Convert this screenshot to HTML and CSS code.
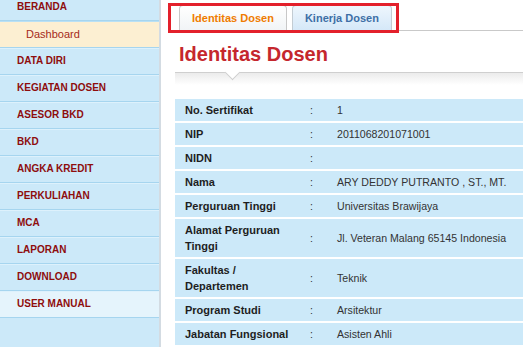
FILE: index.html
```html
<!DOCTYPE html>
<html lang="id">
<head>
    <meta charset="UTF-8">
    <meta name="viewport" content="width=device-width, initial-scale=1.0">
    <title>Identitas Dosen</title>
    <link rel="stylesheet" href="styles.css">
</head>
<body>
    <div class="page">
        <div class="sidebar">
            <ul class="menu">
                <li><a href="#">BERANDA</a></li>
                <li class="sub"><a href="#">Dashboard</a></li>
                <li><a href="#">DATA DIRI</a></li>
                <li><a href="#">KEGIATAN DOSEN</a></li>
                <li><a href="#">ASESOR BKD</a></li>
                <li><a href="#">BKD</a></li>
                <li><a href="#">ANGKA KREDIT</a></li>
                <li><a href="#">PERKULIAHAN</a></li>
                <li><a href="#">MCA</a></li>
                <li><a href="#">LAPORAN</a></li>
                <li><a href="#">DOWNLOAD</a></li>
                <li class="light"><a href="#">USER MANUAL</a></li>
            </ul>
        </div>

        <div class="main">
            <div class="tabs">
                <a href="#" class="tab active">Identitas Dosen</a>
                <a href="#" class="tab">Kinerja Dosen</a>
            </div>
            <div class="highlight"></div>

            <div class="title">
                <h1>Identitas Dosen</h1>
            </div>
            <div class="shade"></div>

            <table class="info">
                <colgroup>
                    <col class="c-label">
                    <col class="c-sep">
                    <col>
                </colgroup>
                <tr><th>No. Sertifikat</th><td class="sep">:</td><td>1</td></tr>
                <tr><th>NIP</th><td class="sep">:</td><td>2011068201071001</td></tr>
                <tr><th>NIDN</th><td class="sep">:</td><td></td></tr>
                <tr><th>Nama</th><td class="sep">:</td><td>ARY DEDDY PUTRANTO , ST., MT.</td></tr>
                <tr><th>Perguruan Tinggi</th><td class="sep">:</td><td>Universitas Brawijaya</td></tr>
                <tr><th>Alamat Perguruan Tinggi</th><td class="sep">:</td><td>Jl. Veteran Malang 65145 Indonesia</td></tr>
                <tr><th>Fakultas / Departemen</th><td class="sep">:</td><td>Teknik</td></tr>
                <tr><th>Program Studi</th><td class="sep">:</td><td>Arsitektur</td></tr>
                <tr><th>Jabatan Fungsional</th><td class="sep">:</td><td>Asisten Ahli</td></tr>
            </table>
        </div>
    </div>
</body>
</html>
```

FILE: styles.css
```css
body {
    margin: 0;
    font-family: "Liberation Sans", Arial, sans-serif;
    background: #fff;
}
.page {
    display: flex;
    height: 347px;
    overflow: hidden;
}
.sidebar {
    width: 159px;
    flex: none;
    background: #cce9f9;
    border-right: 2px solid #d3dbe2;
}
.menu {
    list-style: none;
    margin: -6px 0 0;
    padding: 0;
}
.menu li {
    border-bottom: 1px solid #a6d5ef;
    box-shadow: inset 0 1px 0 #ddf1fc;
}
.menu a {
    display: block;
    height: 26px;
    line-height: 26px;
    padding-left: 17px;
    font-size: 10px;
    font-weight: bold;
    color: #8e0d0d;
    text-decoration: none;
}
.menu .sub {
    background: #fcefd2;
    box-shadow: inset 0 1px 0 #b9e0f4;
}
.menu .sub a {
    padding-left: 26px;
    font-size: 11px;
    font-weight: normal;
    color: #a52a1a;
}
.menu .light {
    background: #e5f4fc;
}
.main {
    flex: 1;
    position: relative;
    padding-left: 14px;
}
.tabs {
    display: flex;
    gap: 5px;
    padding: 5px 0 0 4px;
    border-bottom: 1px solid #c9c9c9;
}
.tab {
    display: block;
    padding: 0 12px;
    line-height: 24px;
    font-size: 11px;
    font-weight: bold;
    text-decoration: none;
    border: 1px solid #c3ccd3;
    border-bottom: none;
    border-radius: 4px 4px 0 0;
    color: #3d6fa6;
    background: linear-gradient(#eef6fd, #d5e8f8);
}
.tab.active {
    color: #f07c00;
    border-color: #c8c8c8;
    background: linear-gradient(#ffffff, #f1f4f6);
}
.highlight {
    position: absolute;
    left: 7px;
    top: 3px;
    width: 231px;
    height: 30px;
    box-sizing: border-box;
    border: 3px solid #e3202b;
}
.title {
    position: relative;
    padding: 11px 0 6px 4px;
    border-bottom: 1px solid #cfcfcf;
}
.title::after {
    content: "";
    position: absolute;
    left: 52px;
    bottom: -6px;
    width: 10px;
    height: 10px;
    background: #fff;
    border-right: 1px solid #cfcfcf;
    border-bottom: 1px solid #cfcfcf;
    transform: rotate(45deg);
}
h1 {
    margin: 0;
    font-size: 20px;
    line-height: 24px;
    color: #c5272d;
}
.shade {
    height: 12px;
    background: linear-gradient(#ebebeb, #ffffff);
}
.info {
    width: 100%;
    margin-top: 14px;
    border-collapse: collapse;
    table-layout: fixed;
    font-size: 11px;
}
.c-label {
    width: 125px;
}
.c-sep {
    width: 37px;
}
.info th,
.info td {
    background: #cce9f9;
    border-bottom: 2px solid #fff;
    line-height: 16px;
    padding: 3px 10px 3px 0;
    text-align: left;
    vertical-align: middle;
    color: #333;
}
.info td {
    font-size: 10.6px;
}
.info th {
    padding: 3px 4px 3px 10px;
    color: #1e1e1e;
}
.info td.sep {
    padding-left: 10px;
}
```
